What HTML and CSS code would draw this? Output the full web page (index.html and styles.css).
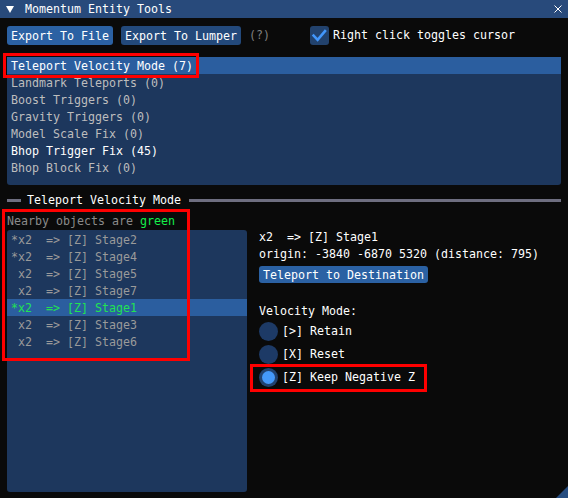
FILE: index.html
```html
<!DOCTYPE html>
<html>
<head>
<meta charset="utf-8">
<title>Momentum Entity Tools</title>
<link rel="stylesheet" href="styles.css">
</head>
<body>
<div class="window">
  <div class="titlebar">
    <svg class="collapse" width="8" height="7" viewBox="0 0 8 7"><path d="M0 0 H8 L4 7 Z" fill="#ffffff"/></svg>
    <span class="title">Momentum Entity Tools</span>
    <svg class="close" width="8" height="8" viewBox="0 0 8 8"><path d="M0.5 0.5 L7.5 7.5 M7.5 0.5 L0.5 7.5" stroke="#ffffff" stroke-width="1" fill="none"/></svg>
  </div>
  <div class="content">
    <div class="toolbar">
      <div class="btn btn-primary">Export To File</div>
      <div class="btn">Export To Lumper</div>
      <span class="help">(?)</span>
      <div class="check">
        <span class="checkbox"><svg width="19" height="19" viewBox="0 0 19 19"><path d="M3.6 9.6 L7.6 13.8 L15 5.2" stroke="#4296fa" stroke-width="2.6" fill="none" stroke-linecap="square"/></svg></span>
        <span>Right click toggles cursor</span>
      </div>
    </div>

    <div class="listbox">
      <div class="lrow sel">Teleport Velocity Mode (7)<span class="annot annot1"></span></div>
      <div class="lrow">Landmark Teleports (0)</div>
      <div class="lrow">Boost Triggers (0)</div>
      <div class="lrow">Gravity Triggers (0)</div>
      <div class="lrow">Model Scale Fix (0)</div>
      <div class="lrow bright">Bhop Trigger Fix (45)</div>
      <div class="lrow">Bhop Block Fix (0)</div>
    </div>

    <div class="septext">
      <span class="sep-line sep-short"></span>
      <span class="sep-label">Teleport Velocity Mode</span>
      <span class="sep-line sep-long"></span>
    </div>

    <div class="section">
      <span class="annot annot2"></span>
      <div class="hint">Nearby objects are <span class="green">green</span></div>
      <div class="cols">
        <div class="child">
          <div class="crow">*x2  =&gt; [Z] Stage2</div>
          <div class="crow">*x2  =&gt; [Z] Stage4</div>
          <div class="crow"> x2  =&gt; [Z] Stage5</div>
          <div class="crow"> x2  =&gt; [Z] Stage7</div>
          <div class="crow sel">*x2  =&gt; [Z] Stage1</div>
          <div class="crow"> x2  =&gt; [Z] Stage3</div>
          <div class="crow"> x2  =&gt; [Z] Stage6</div>
        </div>
        <div class="details">
          <div class="dline">x2  =&gt; [Z] Stage1</div>
          <div class="dline dline2">origin: -3840 -6870 5320 (distance: 795)</div>
          <div class="btn btn-primary btn-small">Teleport to Destination</div>
          <div class="dline vlabel">Velocity Mode:</div>
          <div class="radio"><span class="dot"></span><span>[&gt;] Retain</span></div>
          <div class="radio"><span class="dot"></span><span>[X] Reset</span></div>
          <div class="radio"><span class="dot on"></span><span>[Z] Keep Negative Z</span><span class="annot annot3"></span></div>
        </div>
      </div>
    </div>
  </div>
  <span class="grip"></span>
</div>
</body>
</html>
```
FILE: styles.css
```css
* {
  box-sizing: border-box;
  margin: 0;
  padding: 0;
}

html, body {
  width: 568px;
  height: 498px;
  background: #0a0a0a;
  overflow: hidden;
}

body {
  font-family: "DejaVu Sans Mono", "Liberation Mono", monospace;
  font-size: 11.63px;
  line-height: 13px;
  color: #ffffff;
}

.window {
  position: relative;
  width: 568px;
  height: 498px;
  background: #0a0a0a;
  display: flex;
  flex-direction: column;
}

.titlebar {
  height: 18px;
  flex: 0 0 18px;
  background: #284a7b;
  display: flex;
  align-items: center;
  padding: 0 6px 0 6px;
}

.collapse {
  display: block;
  margin-right: 11px;
}

.title {
  flex: 1;
  white-space: pre;
}

.close {
  display: block;
}

.content {
  flex: 1;
  display: flex;
  flex-direction: column;
  padding: 8px 7px 0 7px;
}

.toolbar {
  display: flex;
  align-items: center;
  height: 19px;
}

.btn {
  height: 19px;
  line-height: 18px;
  padding: 1px 4px 0 4px;
  border-radius: 3px;
  white-space: pre;
  background: #23497b;
  color: #ffffff;
}

.btn-primary {
  background: #2b61a3;
}

.btn + .btn {
  margin-left: 8px;
}

.help {
  margin-left: 8px;
  color: #808080;
  white-space: pre;
}

.check {
  margin-left: 40px;
  display: flex;
  align-items: center;
  white-space: pre;
}

.checkbox {
  width: 19px;
  height: 19px;
  border-radius: 3px;
  background: #22426d;
  margin-right: 4px;
  display: block;
}

.checkbox svg {
  display: block;
}

.listbox {
  margin-top: 12px;
  height: 128px;
  background: #1d375d;
  border-radius: 3px;
}

.lrow {
  position: relative;
  height: 17px;
  line-height: 16px;
  padding: 1px 0 0 4px;
  color: #bdbdbd;
  white-space: pre;
}

.lrow.sel {
  background: #2b5e9f;
  color: #ffffff;
}

.lrow.bright {
  color: #ffffff;
}

.septext {
  margin-top: 6px;
  height: 19px;
  display: flex;
  align-items: center;
}

.sep-line {
  height: 3px;
  background: #6e6e80;
}

.sep-short {
  width: 14px;
  margin-right: 6px;
}

.sep-label {
  white-space: pre;
  margin-right: 8px;
}

.sep-long {
  flex: 1;
}

.section {
  position: relative;
  margin-top: 4px;
}

.hint {
  height: 13px;
  padding-top: 1px;
  color: #8a8a8a;
  white-space: pre;
}

.green {
  color: #14f04a;
}

.cols {
  display: flex;
  margin-top: 3px;
}

.child {
  width: 240px;
  height: 262px;
  flex: 0 0 240px;
  background: #1d375d;
  border-radius: 3px;
  padding-top: 1px;
}

.crow {
  height: 17px;
  line-height: 16px;
  padding: 1px 0 0 4px;
  color: #9a9a9a;
  white-space: pre;
}

.crow.sel {
  background: #2b5e9f;
  color: #20e253;
}

.details {
  margin-left: 12px;
  padding-top: 1px;
  display: flex;
  flex-direction: column;
  align-items: flex-start;
}

.dline {
  height: 13px;
  white-space: pre;
}

.dline2 {
  margin-top: 4px;
}

.btn-small {
  margin-top: 5px;
  height: 17px;
  line-height: 16px;
}

.vlabel {
  margin-top: 22px;
}

.radio {
  position: relative;
  margin-top: 4px;
  height: 19px;
  display: flex;
  align-items: center;
  white-space: pre;
}

.dot {
  width: 19px;
  height: 19px;
  border-radius: 50%;
  background: #1d3a66;
  margin-right: 4px;
  display: flex;
  align-items: center;
  justify-content: center;
}

.dot.on {
  background: #21426f;
}

.dot.on::after {
  content: "";
  width: 13px;
  height: 13px;
  border-radius: 50%;
  background: #4499fa;
}

.annot {
  position: absolute;
  border: 3px solid #ff0000;
  pointer-events: none;
}

.annot1 {
  left: -4px;
  top: -4px;
  width: 196px;
  height: 25px;
}

.annot2 {
  left: -5px;
  top: -5px;
  width: 188px;
  height: 152px;
}

.annot3 {
  left: -9px;
  top: -4px;
  width: 177px;
  height: 28px;
}

.grip {
  position: absolute;
  right: 0;
  bottom: 0;
  width: 0;
  height: 0;
  border-left: 12px solid transparent;
  border-bottom: 12px solid #264d80;
}
```
